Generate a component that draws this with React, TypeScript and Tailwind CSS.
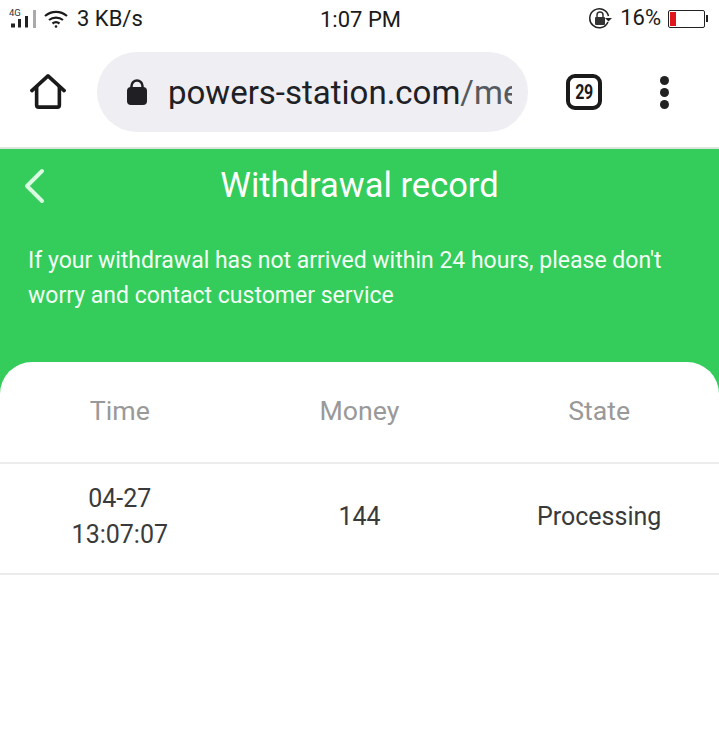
// App.tsx
const rows = [{ time: ["04-27", "13:07:07"], money: "144", state: "Processing" }];

function StatusBar() {
  return (
    <div className="h-[37px] flex items-center justify-between relative bg-white text-[#1a1a1a]">
      <div className="flex items-center pl-[9px]">
        <svg width="28" height="24" viewBox="0 0 28 24" className="mr-[6px]">
          <text x="0" y="9" fontSize="9.500" fontFamily="Roboto, sans-serif" fill="#333">4G</text>
          <rect x="2" y="16.500" width="4" height="4" fill="#222" />
          <rect x="9" y="12" width="3" height="8.500" fill="#222" />
          <rect x="16" y="9" width="3" height="11.500" fill="#222" />
          <rect x="24" y="3" width="3" height="18" fill="#aaa" />
        </svg>
        <svg width="26" height="20" viewBox="0 0 26 20" fill="none" stroke="#1a1a1a" strokeWidth="2.200" className="mr-[8px]">
          <path d="M2 7c6.500-5.500 15.500-5.500 22 0" />
          <path d="M6 11c4-3.300 10-3.300 14 0" />
          <path d="M9.500 14.500c2-1.500 5-1.500 7 0" />
          <circle cx="13" cy="17.500" r="1.300" fill="#1a1a1a" stroke="none" />
        </svg>
        <span className="text-[22px] leading-none">3 KB/s</span>
      </div>
      <span className="absolute left-[320px] top-[8px] text-[22px] leading-[24px]">1:07 PM</span>
      <div className="flex items-center pr-[11px]">
        <svg width="24" height="24" viewBox="0 0 24 24" fill="none" className="mr-[8px]">
          <path d="M20 15a9.500 9.500 0 1 1 .5-6" stroke="#222" strokeWidth="1.500" />
          <path d="M17 11h7l-3.500 3.500z" fill="#222" />
          <rect x="7" y="10" width="10" height="8" rx="1" fill="#333" />
          <path d="M9 10V8a3 3 0 0 1 6 0v2" stroke="#333" strokeWidth="1.500" />
        </svg>
        <span className="text-[22px] leading-none mr-[7px] -mt-[2px]">16%</span>
        <div className="w-[37px] h-[18px] border border-[#222] rounded-[2px] p-[1px]">
          <div className="w-[6px] h-full bg-[#e0161c]" />
        </div>
        <div className="w-[2px] h-[7px] bg-[#222] ml-[1px]" />
      </div>
    </div>
  );
}

function BrowserBar() {
  return (
    <div className="h-[112px] flex items-center bg-white border-b-2 border-[#dde3df]">
      <svg width="36" height="36" viewBox="0 0 38 38" fill="none" stroke="#1a1a1a" strokeWidth="3.800" strokeLinejoin="round" strokeLinecap="round" className="ml-[30px]">
        <path d="M2 17.500 19 2l17 15.500" />
        <path d="M7 14v19a2 2 0 0 0 2 2h20a2 2 0 0 0 2-2V14" />
      </svg>
      <div className="ml-[31px] w-[431px] h-[80px] rounded-[40px] bg-[#eeeef3] flex items-center pl-[30px] pr-[16px]">
        <svg width="20" height="26" viewBox="0 0 20 26" fill="#202024" className="shrink-0">
          <rect x="0" y="8" width="20" height="18" rx="4" />
          <path d="M4.500 10V7a5.500 5.500 0 0 1 11 0v3" fill="none" stroke="#202024" strokeWidth="2.500" />
        </svg>
        <div className="ml-[21px] text-[33px] leading-none whitespace-nowrap overflow-hidden text-[#555a60]">
          <span className="text-[#202124]">powers-station.com</span>/mem
        </div>
      </div>
      <div className="ml-[38px] w-[36px] h-[36px] border-[4px] border-[#1a1a1a] rounded-[9px] flex items-center justify-center font-bold text-[20px] text-[#1a1a1a]">
        <span className="inline-block scale-x-[0.8] tracking-[-0.5px]">29</span>
      </div>
      <div className="ml-[58px] flex flex-col gap-[3px]">
        <div className="w-[9px] h-[9px] rounded-full bg-[#222]" />
        <div className="w-[9px] h-[9px] rounded-full bg-[#222]" />
        <div className="w-[9px] h-[9px] rounded-full bg-[#222]" />
      </div>
    </div>
  );
}

export default function App() {
  return (
    <div className="h-[741px] overflow-hidden bg-white font-['Roboto',sans-serif]">
      <StatusBar />
      <BrowserBar />
      <div className="h-[213px] bg-[#34cc5a] text-white">
        <div className="h-[72px] flex items-center relative justify-center">
          <svg width="24" height="36" viewBox="0 0 24 36" fill="none" stroke="#d9fbe2" strokeWidth="4" strokeLinecap="round" strokeLinejoin="round" className="absolute left-[23px] top-[19px]">
            <path d="M19 3 4 18l15 15" />
          </svg>
          <h1 className="text-[34.500px] leading-none">Withdrawal record</h1>
        </div>
        <p className="mt-[22px] px-[28px] text-[23px] leading-[35px] text-[#f2fff5]">
          If your withdrawal has not arrived within 24 hours, please don't worry and contact customer service
        </p>
      </div>
      <div className="bg-[#34cc5a]">
        <div className="bg-white rounded-t-[32px]">
          <div className="grid grid-cols-3 h-[102px] pb-[2px] items-center text-center text-[26.700px] text-[#999] border-b-2 border-[#ececec]">
            <span>Time</span>
            <span>Money</span>
            <span>State</span>
          </div>
          {rows.map((row) => (
            <div key={row.state} className="grid grid-cols-3 h-[111px] pb-[4px] items-center text-center text-[25px] leading-[36px] text-[#3a3a3a] border-b-2 border-[#ececec]">
              <div>
                {row.time.map((t) => (
                  <div key={t}>{t}</div>
                ))}
              </div>
              <div>{row.money}</div>
              <div>{row.state}</div>
            </div>
          ))}
        </div>
      </div>
    </div>
  );
}
